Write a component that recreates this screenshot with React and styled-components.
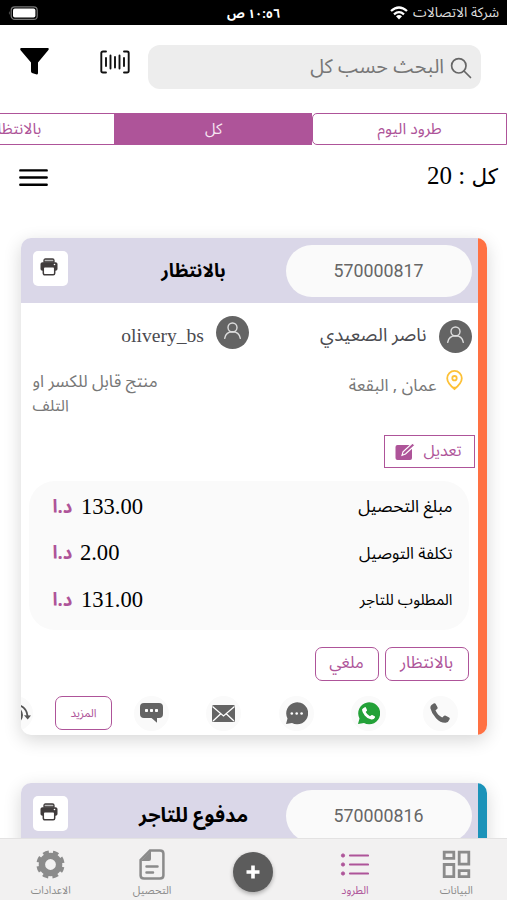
import React, { Component } from 'react'
import styled, { createGlobalStyle, ThemeProvider } from 'styled-components'

const theme = {
  main: '#ae5499',
  dark: '#646464',
  muted: '#8b8b8b',
  lavender: '#dad7e8',
  panel: '#fafafa',
  arabic: '"Noto Sans Arabic", "DejaVu Sans", sans-serif',
  serif: '"Liberation Serif", "DejaVu Sans", serif'
}

const GlobalStyle = createGlobalStyle`
  * {
    box-sizing: border-box;
  }
  body {
    margin: 0;
    background: #fff;
  }
  svg {
    display: block;
    flex: none;
  }
`

const Screen = styled.div`
  width: 507px;
  height: 900px;
  display: flex;
  flex-direction: column;
  overflow: hidden;
  background: #fff;
  font-family: ${props => props.theme.arabic};
`
const Text = styled.span`
  font-size: ${props => props.$size}px;
  white-space: nowrap;
  line-height: 1.2;
`
const StatusBar = styled.div`
  flex: none;
  height: 25px;
  display: grid;
  grid-template-columns: 1fr 1fr 1fr;
  align-items: center;
  padding: 2px 8px 0;
  background: #000;
  color: #fff;
`
const Carrier = styled.div`
  display: flex;
  align-items: center;
  gap: 5px;
  color: #ddd;
`
const Clock = styled.div`
  text-align: center;
  font-weight: bold;
  line-height: 1;
`
const Battery = styled.div`
  display: flex;
  justify-content: flex-end;
  padding-bottom: 1px;
`
const Header = styled.header`
  flex: none;
  height: 88px;
  display: flex;
  align-items: flex-start;
  padding: 20px 26px 0 20px;
`
const Search = styled.div`
  width: 333px;
  height: 44px;
  display: flex;
  align-items: center;
  gap: 6px;
  padding: 1px 9px 0 0;
  border-radius: 12px;
  background: #ededed;
  color: #777;
`
const HeaderIcons = styled.div`
  flex: 1;
  display: flex;
  justify-content: space-between;
  align-items: center;
  height: 33px;
  padding: 0 18px 0 0;
`
const Tabs = styled.div`
  flex: none;
  display: flex;
  height: 32px;
`
const Tab = styled.div`
  flex: none;
  width: ${props => props.$width}px;
  display: flex;
  align-items: center;
  justify-content: center;
  border: 1px solid ${props => props.theme.main};
  border-radius: ${props => (props.$rounded ? '5px 0 0 5px' : 0)};
  background: ${props => (props.$active ? props.theme.main : '#fff')};
  color: ${props => (props.$active ? '#f7e6f3' : props.theme.main)};
`
const Summary = styled.div`
  flex: none;
  height: 93px;
  display: flex;
  justify-content: space-between;
  align-items: flex-start;
  padding: 15px 9px 0 19px;
`
const Count = styled.div`
  font-family: ${props => props.theme.serif};
  font-size: 25px;
  line-height: 32px;
`
const CountLabel = styled.span`
  font-size: 21.5px;
`
const MenuButton = styled.div`
  padding-top: 8px;
`
const List = styled.main`
  flex: 1;
  min-height: 0;
  display: flex;
  flex-direction: column;
  gap: 48px;
  padding: 0 20px 0 20.5px;
`
const Card = styled.article`
  flex: none;
  height: 497px;
  display: flex;
  border-radius: 10px;
  background: #fff;
  box-shadow: 0 5px 18px rgba(0, 0, 0, 0.16);
  overflow: hidden;
`
const Stripe = styled.div`
  width: 9.5px;
  background: ${props => props.$color};
`
const CardContent = styled.div`
  flex: 1;
  min-width: 0;
`
const CardHeader = styled.div`
  height: 65px;
  display: flex;
  align-items: flex-start;
  padding: 7px 6px 0 12px;
  background: ${props => props.theme.lavender};
`
const Pill = styled.div`
  width: 186px;
  height: 52px;
  border-radius: 26px;
  background: ${props => props.theme.panel};
  color: #666;
  font: 17.8px/51px Roboto, sans-serif;
  text-align: center;
`
const Title = styled.h2`
  flex: 1;
  margin: 0;
  text-align: center;
  font-size: ${props => props.$size}px;
  line-height: 53px;
  transform: translateX(17px);
`
const Print = styled.div`
  width: 35px;
  height: 35px;
  margin-top: 6px;
  display: flex;
  justify-content: center;
  padding: 7px 2px 0 0;
  border-radius: 5px;
  background: #fff;
`
const People = styled.div`
  height: 64px;
  display: grid;
  grid-template-columns: 222.5px 1fr;
  align-items: start;
  padding: 13px 6px 0 12px;
`
const Person = styled.div`
  display: flex;
  align-items: center;
  gap: 12px;
  padding-top: ${props => props.$top || 0}px;
  color: #4b4b50;
`
const Username = styled.span`
  font-family: ${props => props.theme.serif};
  font-size: 19.6px;
  padding-top: 6px;
`
const Places = styled.div`
  height: 68px;
  display: flex;
  justify-content: space-between;
  padding: 3px 15px 0 12px;
  color: #777;
`
const Address = styled.div`
  display: flex;
  align-items: flex-start;
  gap: 9px;
`
const AddressText = styled.div`
  display: flex;
  padding-top: 5.5px;
`
const Note = styled.div`
  display: flex;
  flex-direction: column;
  align-items: flex-end;
  gap: 4.5px;
  padding-top: 2px;
`
const Edit = styled.button`
  width: 91px;
  height: 33px;
  margin: 0 3px 0 0;
  padding: 0 1px 0 0;
  display: flex;
  align-items: center;
  justify-content: center;
  gap: 7px;
  border: 1px solid ${props => props.theme.main};
  background: #fff;
  color: ${props => props.theme.main};
  font-family: inherit;
`
const Amounts = styled.div`
  height: 149px;
  margin: 13px 9px 0 8px;
  padding: 3px 16px 7px 24px;
  display: grid;
  grid-template-rows: repeat(3, 1fr);
  align-items: center;
  border-radius: 26px;
  background: ${props => props.theme.panel};
`
const Amount = styled.div`
  display: flex;
  justify-content: space-between;
  align-items: center;
`
const Value = styled.div`
  display: flex;
  align-items: center;
  gap: ${props => props.$gap}px;
  font: 22.6px/30px ${props => props.theme.serif};
`
const Currency = styled.span`
  color: ${props => props.theme.main};
  font: bold 18.5px/30px ${props => props.theme.arabic};
  padding-top: 2px;
`
const States = styled.div`
  display: flex;
  gap: 6px;
  padding: 17px 9px 0 0;
`
const Outline = styled.button`
  flex: none;
  width: ${props => props.$width}px;
  height: 34px;
  padding: 0;
  border: 1px solid ${props => props.theme.main};
  border-radius: 7px;
  background: #fff;
  color: ${props => props.theme.main};
  font-family: inherit;
`
const Actions = styled.div`
  display: flex;
  align-items: center;
  height: 34px;
  margin-top: 15px;
  padding-right: 20px;
`
const Round = styled.div`
  flex: none;
  width: 35px;
  height: 35px;
  margin-left: ${props => props.$gap}px;
  display: flex;
  align-items: center;
  justify-content: center;
  border-radius: 50%;
  background: ${props => props.theme.panel};
`
const More = styled(Outline)`
  margin-left: 22px;
`
const Nav = styled.nav`
  flex: none;
  height: 62px;
  display: flex;
  position: relative;
  border-top: 1px solid #e3e2e2;
  background: #f2f1f1;
`
const NavItem = styled.div`
  flex: 1;
  display: flex;
  flex-direction: column;
  align-items: center;
  padding-top: 10px;
  color: ${props => (props.$active ? props.theme.main : props.theme.muted)};
`
const NavIcon = styled.div`
  height: 31px;
  margin-bottom: 5px;
  display: flex;
  align-items: center;
`
const Plus = styled.div`
  width: 40px;
  height: 40px;
  margin-top: 3px;
  display: flex;
  align-items: center;
  justify-content: center;
  border-radius: 50%;
  background: #5c5c5c;
  box-shadow: 0 2px 4px rgba(0, 0, 0, 0.3);
`

const WifiIcon = () => (
  <svg width="18" height="14" viewBox="0 0 18 14" fill="none" stroke="#fff" strokeWidth="2.3">
    <path d="M1 5Q9 -2 17 5M4 8.3Q9 4 14 8.3" />
    <path d="M9 13.4l-3-3.2Q9 7.8 12 10.2z" fill="#fff" stroke="none" />
  </svg>
)
const BatteryIcon = () => (
  <svg width="30" height="14" viewBox="0 0 30 14">
    <rect x="3.2" y=".8" width="26" height="12.6" rx="3.5" fill="none" stroke="#777" strokeWidth="1.2" />
    <rect x="5" y="2.6" width="22.4" height="9" rx="1.8" fill="#fff" />
    <path d="M1.6 5Q0 7 1.6 9z" fill="#777" />
  </svg>
)
const SearchIcon = () => (
  <svg width="22" height="22" viewBox="0 0 22 22" fill="none" stroke="#666" strokeWidth="1.7">
    <circle cx="8.8" cy="8.8" r="7.2" />
    <path d="M14 14l6.5 6.5" strokeLinecap="round" />
  </svg>
)
const FilterIcon = () => (
  <svg width="29" height="27" viewBox="0 0 29 27">
    <path d="M.8 0h27.4q1 .8.2 2L18 14.6v10.6q-.3 1.7-2 1.1l-4-1.4q-1-.5-1-1.6v-8.7L.4 2Q0 .8.8 0z" />
  </svg>
)
const BarcodeIcon = () => (
  <svg width="30" height="24" viewBox="0 0 30 24" fill="none" stroke="#111" strokeWidth="1.9" strokeLinecap="round">
    <path d="M6 1.5H3Q1.3 1.5 1.3 3v18Q1.3 22.5 3 22.5h3M24 1.5h3q1.7 0 1.7 1.5v18q0 1.5-1.7 1.5h-3" />
    <path d="M6 8v8M10.5 5.5v13M15 7v10.5M19.5 5.5v13M24 8v8" />
  </svg>
)
const MenuIcon = () => (
  <svg width="29" height="19" viewBox="0 0 29 19" stroke="#000" strokeWidth="2.4" strokeLinecap="round">
    <path d="M1.3 2.4h26.4M1.3 9.5h26.4M1.3 16.7h26.4" />
  </svg>
)
const PrintIcon = () => (
  <svg width="18" height="18" viewBox="0 0 18 18">
    <path d="M4 4V2.5Q4 1 5.5 1h7Q14 1 14 2.5V4z" fill="#bbb" stroke="#403c3c" strokeWidth="1.3" />
    <path d="M2.5 4.2h13Q17.5 4.2 17.5 6v5q0 1.7-2 1.7h-13Q.5 12.7.5 11V6Q.5 4.2 2.5 4.2z" fill="#403c3c" />
    <rect x="3.3" y="8.8" width="11.4" height="8" rx="1.5" fill="#fff" stroke="#403c3c" strokeWidth="1.5" />
    <circle cx="14.5" cy="6.5" r=".8" fill="#fff" />
  </svg>
)
const UserIcon = () => (
  <svg width="33" height="33" viewBox="0 0 33 33">
    <circle cx="16.5" cy="16.5" r="16.5" fill="#646464" />
    <g fill="none" stroke="#ddd" strokeWidth="1.4" strokeLinecap="round">
      <circle cx="16.5" cy="11.5" r="4.5" />
      <path d="M8.7 22.3Q10 15.8 16.5 15.8T24.3 22.3" />
    </g>
  </svg>
)
const PinIcon = () => (
  <svg width="17" height="21" viewBox="0 0 17 21" fill="none" stroke="#fdc137" strokeWidth="1.8">
    <path d="M8.5 19Q1.2 13 1.2 8.2a7.3 7.3 0 0 1 14.6 0Q15.8 13 8.5 19z" />
    <circle cx="8.5" cy="8.2" r="2.2" />
    <path d="M6 16.7h5L8.5 19.5z" fill="#fdc137" stroke="none" />
  </svg>
)
const EditIcon = () => (
  <svg width="21" height="19" viewBox="0 0 21 19">
    <rect x=".5" y="3" width="16.5" height="15" rx="2" fill="#ae5499" />
    <path d="M7 13.3l1-3.5L17.5 1 20 3.2 10.5 12z" fill="#ae5499" stroke="#fff" strokeWidth="1.2" />
  </svg>
)
const PhoneIcon = () => (
  <svg width="20" height="20" viewBox="0 0 20 20" fill="#646464">
    <path d="M1.5 2L4 .3q1-.5 1.600.5L7.500 4.300q.4 1-.4 1.700L5.500 7.200q1.800 4.700 6.700 7.300l1.900-1.700q.8-.5 1.700-.1l3.300 1.800q1 .7.500 1.700-1 3-4 3.500Q10.500 20 6 15.200T.4 5.300Q.2 3 1.500 2z" />
  </svg>
)
const WhatsappIcon = () => (
  <svg width="23" height="23" viewBox="0 0 23 23">
    <path d="M1 22l1.500-5.500A11 11 0 1 1 7 21z" fill="#23a138" />
    <path d="M6.200 6.200l1.600-1q.8-.3 1.200.5l1 2.200q.2.700-.4 1.200l-.9.900q1.400 2.800 4.300 4.300l1.200-1.100q.5-.5 1.100-.2l2.300 1.200q.8.500.4 1.300-1.200 2.400-3.700 2-4-.7-6.600-4T5 7.700q.2-1 1.200-1.500z" fill="#fff" />
  </svg>
)
const ChatIcon = () => (
  <svg width="23" height="23" viewBox="0 0 23 23">
    <path d="M1 22l1.500-5.500A11 11 0 1 1 7 21z" fill="#646464" />
    <g fill="#fff">
      <circle cx="6.8" cy="11.5" r="1.3" />
      <circle cx="11.7" cy="11.5" r="1.3" />
      <circle cx="16.6" cy="11.5" r="1.3" />
    </g>
  </svg>
)
const MailIcon = () => (
  <svg width="23" height="17" viewBox="0 0 23 17">
    <rect width="23" height="17" rx="1.5" fill="#646464" />
    <path d="M.5 1.5L11.5 11 22.5 1.5M1 16l7.5-7M22 16l-7.5-7" fill="none" stroke="#fff" strokeWidth="1.3" />
  </svg>
)
const SmsIcon = () => (
  <svg width="23" height="20" viewBox="0 0 23 20">
    <path d="M4 0h15q4 0 4 4v7q0 4-4 4h-2v4.800L11.500 15H4q-4 0-4-4V4Q0 0 4 0z" fill="#646464" />
    <g fill="#fff">
      <rect x="5" y="6" width="3" height="3" rx=".8" />
      <rect x="10" y="6" width="3" height="3" rx=".8" />
      <rect x="15" y="6" width="3" height="3" rx=".8" />
    </g>
  </svg>
)
const ReturnIcon = () => (
  <svg width="31" height="20" viewBox="0 0 31 20" fill="none" stroke="#555" strokeWidth="1.9">
    <path d="M18 2q8.500 2 9.500 11" />
    <path d="M24 12.300l7 .2-3.300 4z" fill="#555" stroke="none" />
    <path d="M19 5.500q6 6.500 0 13" />
  </svg>
)
const GridIcon = () => (
  <svg width="29" height="29" viewBox="0 0 29 29" fill="none" stroke="currentColor" strokeWidth="2.8">
    <path d="M2.2 2.2h9.6v6.2H2.2zM17.2 2.2h9.6v12H17.2zM2.2 14.5h9.6v12.2H2.2zM17.2 20.6h9.6v6.1H17.2z" />
  </svg>
)
const ListIcon = () => (
  <svg width="29" height="29" viewBox="0 0 29 29" stroke="currentColor" fill="currentColor">
    <path d="M10 5.5h18M10 14.5h18M10 23.5h18" strokeWidth="2.2" strokeLinecap="round" />
    <circle cx="3" cy="5.5" r="1.6" />
    <circle cx="3" cy="14.5" r="1.6" />
    <circle cx="3" cy="23.5" r="1.6" />
  </svg>
)
const FileIcon = () => (
  <svg width="26" height="31" viewBox="0 0 26 31" fill="none" stroke="currentColor" strokeWidth="2.5">
    <path d="M11 1.4h10q3.4 0 3.4 3v22q0 3-3.4 3H5q-3.4 0-3.4-3V11z" />
    <path d="M12 1.5V10q0 2-2 2H2z" fill="currentColor" stroke="none" />
    <path d="M7.5 17.5h11M7.5 23.5h6.5" strokeLinecap="round" />
  </svg>
)
const GearIcon = () => (
  <svg width="29" height="29" viewBox="0 0 29 29" fill="none" stroke="currentColor">
    <circle cx="14.5" cy="14.5" r="8.6" strokeWidth="6.4" />
    <circle
      cx="14.5"
      cy="14.5"
      r="12.5"
      strokeWidth="3.2"
      strokeDasharray="5.8 4.017"
      strokeDashoffset="2.9"
      transform="rotate(22.5 14.5 14.5)"
    />
  </svg>
)
const PlusIcon = () => (
  <svg width="14" height="14" viewBox="0 0 14 14" stroke="#fff" strokeWidth="3.6">
    <path d="M7 .5v13M.5 7h13" />
  </svg>
)

const amounts = [
  { label: 'مبلغ التحصيل', value: '133.00', size: 17.1, gap: 8.5 },
  { label: 'تكلفة التوصيل', value: '2.00', size: 16.4, gap: 7.5 },
  { label: 'المطلوب للتاجر', value: '131.00', size: 15.4, gap: 8.5 }
]

const ParcelHeader = ({ number, title, size }) => (
  <CardHeader>
    <Pill>{number}</Pill>
    <Title $size={size}>{title}</Title>
    <Print>
      <PrintIcon />
    </Print>
  </CardHeader>
)

class App extends Component {
  renderDetails() {
    return (
      <>
        <People>
          <Person $top={4}>
            <UserIcon />
            <Text $size={18.5}>ناصر الصعيدي</Text>
          </Person>
          <Person>
            <UserIcon />
            <Username>olivery_bs</Username>
          </Person>
        </People>
        <Places>
          <Address>
            <PinIcon />
            <AddressText>
              <Text $size={16.9}>عمان , البقعة</Text>
            </AddressText>
          </Address>
          <Note>
            <Text $size={16.9}>منتج قابل للكسر او</Text>
            <Text $size={16}>التلف</Text>
          </Note>
        </Places>
        <Edit>
          <Text $size={16}>تعديل</Text>
          <EditIcon />
        </Edit>
        <Amounts>
          {amounts.map(({ label, value, size, gap }) => (
            <Amount key={label}>
              <Text $size={size}>{label}</Text>
              <Value $gap={gap}>
                <span>{value}</span>
                <Currency>د.ا</Currency>
              </Value>
            </Amount>
          ))}
        </Amounts>
        <States>
          <Outline $width={84}>
            <Text $size={16.9}>بالانتظار</Text>
          </Outline>
          <Outline $width={64}>
            <Text $size={16.5}>ملغي</Text>
          </Outline>
        </States>
        <Actions>
          <Round $gap={36.5}>
            <PhoneIcon />
          </Round>
          <Round $gap={37.5}>
            <WhatsappIcon />
          </Round>
          <Round $gap={38}>
            <ChatIcon />
          </Round>
          <Round $gap={37}>
            <MailIcon />
          </Round>
          <Round $gap={21.5}>
            <SmsIcon />
          </Round>
          <More $width={57}>
            <Text $size={11.5}>المزيد</Text>
          </More>
          <Round $gap={0}>
            <ReturnIcon />
          </Round>
        </Actions>
      </>
    )
  }

  render() {
    return (
      <ThemeProvider theme={theme}>
        <GlobalStyle />
        <Screen dir="rtl">
          <StatusBar>
            <Carrier>
              <Text $size={13.8}>شركة الاتصالات</Text>
              <WifiIcon />
            </Carrier>
            <Clock>
              <Text $size={12.5}>١٠:٥٦ ص</Text>
            </Clock>
            <Battery>
              <BatteryIcon />
            </Battery>
          </StatusBar>
          <Header>
            <Search>
              <SearchIcon />
              <Text $size={19.8}>البحث حسب كل</Text>
            </Search>
            <HeaderIcons>
              <BarcodeIcon />
              <FilterIcon />
            </HeaderIcons>
          </Header>
          <Tabs>
            <Tab $width={195} $rounded>
              <Text $size={15.7}>طرود اليوم</Text>
            </Tab>
            <Tab $width={197} $active>
              <Text $size={15}>كل</Text>
            </Tab>
            <Tab $width={197}>
              <Text $size={15.7}>بالانتظار</Text>
            </Tab>
          </Tabs>
          <Summary>
            <Count>
              <CountLabel>كل</CountLabel> : 20
            </Count>
            <MenuButton>
              <MenuIcon />
            </MenuButton>
          </Summary>
          <List>
            <Card>
              <Stripe $color="#ff7143" />
              <CardContent>
                <ParcelHeader number="570000817" title="بالانتظار" size={18.5} />
                {this.renderDetails()}
              </CardContent>
            </Card>
            <Card>
              <Stripe $color="#1b93b9" />
              <CardContent>
                <ParcelHeader number="570000816" title="مدفوع للتاجر" size={20} />
              </CardContent>
            </Card>
          </List>
          <Nav>
            <NavItem>
              <NavIcon>
                <GridIcon />
              </NavIcon>
              <Text $size={10.8}>البيانات</Text>
            </NavItem>
            <NavItem $active>
              <NavIcon>
                <ListIcon />
              </NavIcon>
              <Text $size={10.8}>الطرود</Text>
            </NavItem>
            <NavItem>
              <Plus>
                <PlusIcon />
              </Plus>
            </NavItem>
            <NavItem>
              <NavIcon>
                <FileIcon />
              </NavIcon>
              <Text $size={10.8}>التحصيل</Text>
            </NavItem>
            <NavItem>
              <NavIcon>
                <GearIcon />
              </NavIcon>
              <Text $size={10.5}>الاعدادات</Text>
            </NavItem>
          </Nav>
        </Screen>
      </ThemeProvider>
    )
  }
}

export default App
